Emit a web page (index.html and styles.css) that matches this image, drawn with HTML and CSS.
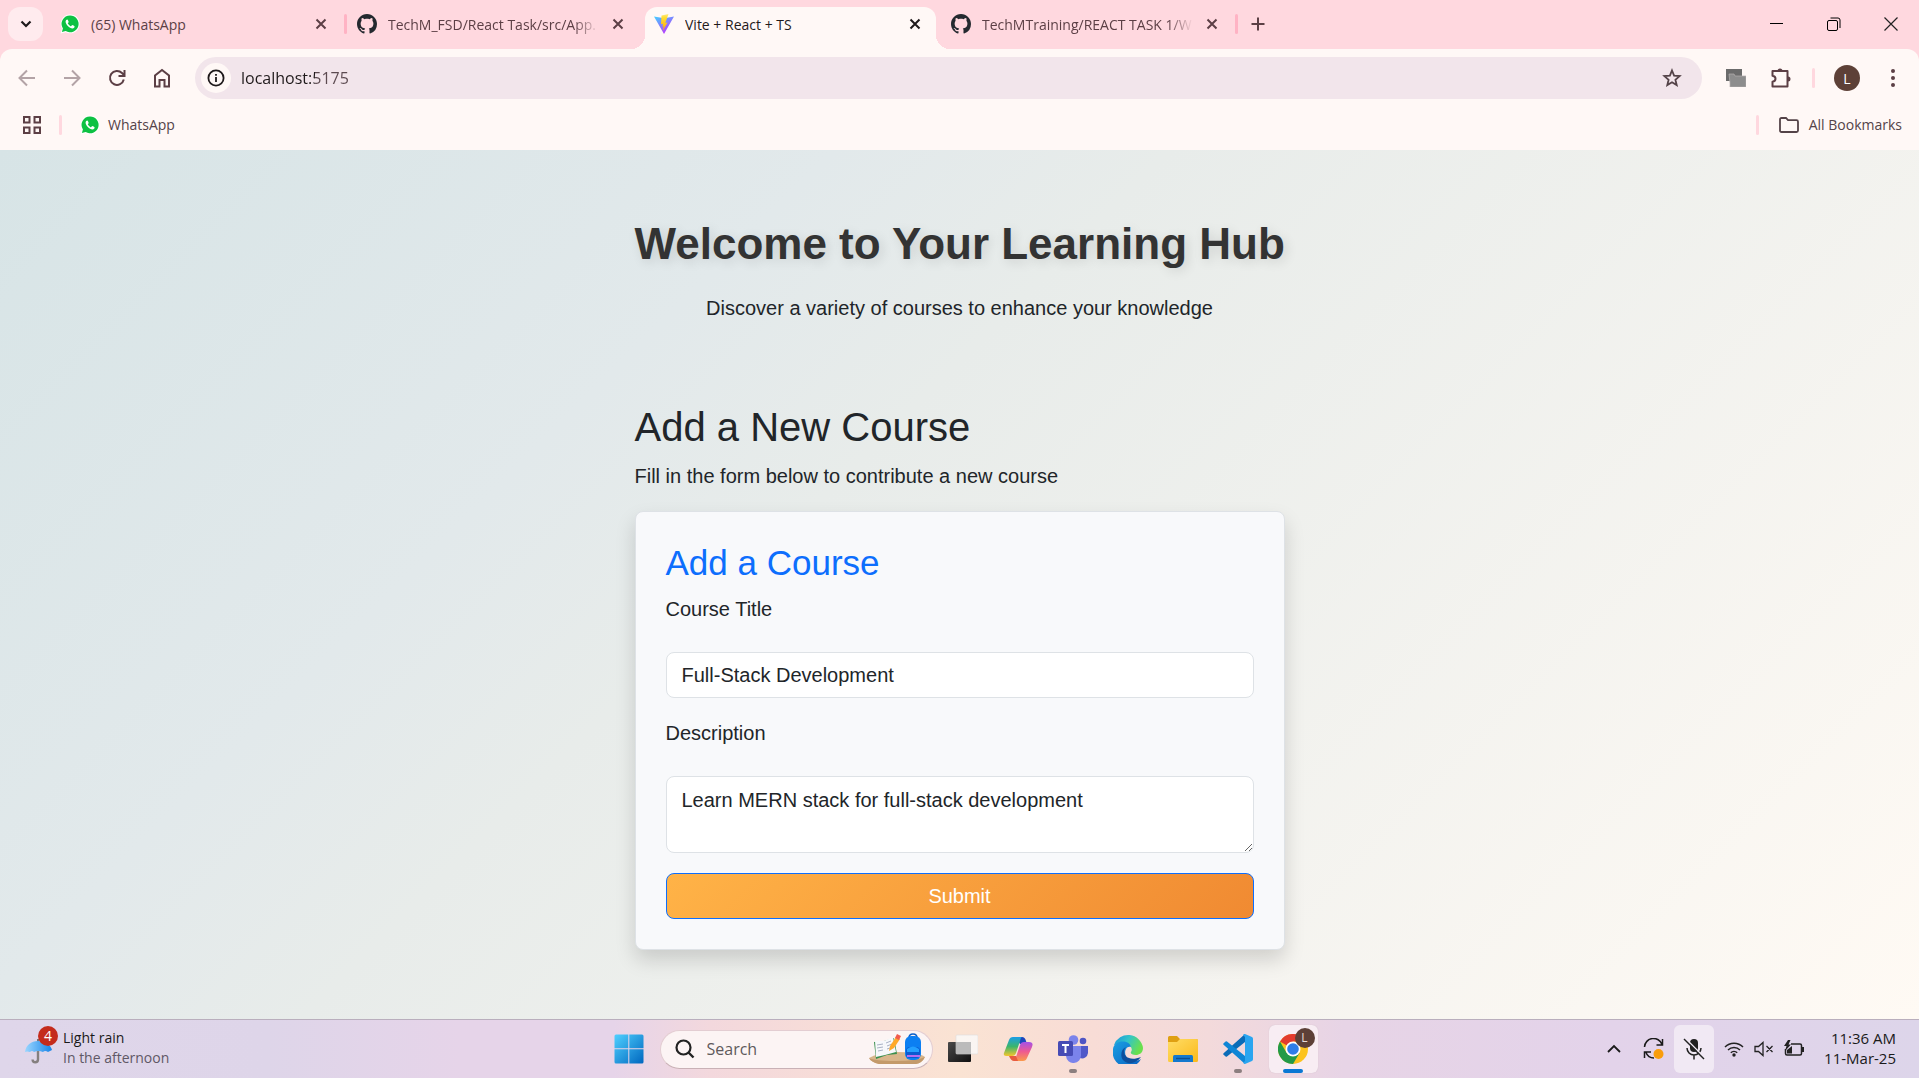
FILE: index.html
```html
<!DOCTYPE html>
<html lang="en">
<head>
<meta charset="utf-8">
<meta name="viewport" content="width=device-width, initial-scale=1">
<title>Vite + React + TS</title>
<link rel="stylesheet" href="styles.css">
</head>
<body>
<svg class="defs" aria-hidden="true">
  <defs>
    <symbol id="close" viewBox="0 0 12 12"><path d="M1.500 1.500 10.500 10.500M10.500 1.500 1.500 10.500" fill="none" stroke="currentColor" stroke-width="2"/></symbol>
    <symbol id="whatsapp" viewBox="0 0 20 20"><path d="M10 .5a9.300 9.300 0 0 0-8 14L.6 19.600l5.200-1.400A9.400 9.400 0 1 0 10 .5z" fill="#fff"/><path d="M10 1.500a8.400 8.400 0 0 0-7.100 12.900L1.900 18l3.800-1A8.400 8.400 0 1 0 10 1.500z" fill="#0dc143"/><path d="M7.200 5.400c-.5 0-1.600.7-1.600 2.200 0 3 3.800 6.800 6.900 6.800 1.400 0 2.100-1.100 2.100-2 0-.4-1.900-1.400-2.300-1.400-.5 0-.8 1.200-1.300 1.200-.7 0-3.200-2.200-3.200-3 0-.4.9-.8.9-1.300S7.700 5.400 7.200 5.400z" fill="#fff"/></symbol>
    <symbol id="github" viewBox="0 0 16 16"><path fill="#24292f" d="M8 0C3.580 0 0 3.580 0 8c0 3.540 2.290 6.530 5.470 7.590.4.070.55-.17.55-.38 0-.19-.01-.82-.01-1.490-2.010.37-2.530-.49-2.690-.94-.09-.23-.48-.94-.82-1.130-.28-.15-.68-.52-.01-.53.63-.01 1.080.58 1.230.82.72 1.210 1.870.87 2.330.66.070-.52.28-.87.51-1.070-1.780-.2-3.640-.89-3.640-3.950 0-.87.31-1.590.82-2.150-.08-.2-.36-1.020.08-2.120 0 0 .67-.21 2.200.82.64-.18 1.320-.27 2-.27s1.360.09 2 .27c1.530-1.040 2.200-.82 2.200-.82.44 1.100.16 1.920.08 2.120.51.56.82 1.270.82 2.150 0 3.070-1.870 3.750-3.650 3.950.29.25.54.73.54 1.480 0 1.070-.01 1.930-.01 2.200 0 .21.15.46.55.38A8.010 8.010 0 0 0 16 8c0-4.420-3.580-8-8-8z"/></symbol>
    <linearGradient id="vp" x1="0" y1="0" x2=".6" y2="1"><stop stop-color="#41d1ff"/><stop offset="1" stop-color="#bd34fe"/></linearGradient>
    <linearGradient id="vy" x1="0" y1="0" x2="0" y2="1"><stop stop-color="#ffea83"/><stop offset=".2" stop-color="#ffdd35"/><stop offset="1" stop-color="#ffa800"/></linearGradient>
    <linearGradient id="win" x1="0" y1="0" x2="1" y2="1"><stop stop-color="#4fd0ff"/><stop offset="1" stop-color="#0067bf"/></linearGradient>
    <linearGradient id="cpa" x1="0" y1="0" x2="0" y2="1"><stop stop-color="#1a9ee8"/><stop offset=".5" stop-color="#3bb56c"/><stop offset="1" stop-color="#f5c52b"/></linearGradient>
    <linearGradient id="cpb" x1="0" y1="0" x2="0" y2="1"><stop stop-color="#a351e8"/><stop offset=".5" stop-color="#ee5a92"/><stop offset="1" stop-color="#fb9a4b"/></linearGradient>
    <linearGradient id="edgeb" x1="0" y1="0" x2="1" y2="1"><stop stop-color="#1a9fe3"/><stop offset="1" stop-color="#0a5fc0"/></linearGradient>
    <linearGradient id="edgeg" x1="0" y1="0" x2="1" y2=".4"><stop stop-color="#1793dd"/><stop offset=".5" stop-color="#33c4c9"/><stop offset="1" stop-color="#69e04d"/></linearGradient>
    <linearGradient id="fold" x1="0" y1="0" x2="1" y2="1"><stop stop-color="#ffdd66"/><stop offset="1" stop-color="#fbb91a"/></linearGradient>
    <linearGradient id="umb" x1="0" y1="0" x2="1" y2="0"><stop stop-color="#9ad6ff"/><stop offset="1" stop-color="#1784e8"/></linearGradient>
    <linearGradient id="dark" x1="0" y1="0" x2="1" y2="1"><stop stop-color="#4a4a4a"/><stop offset="1" stop-color="#0f0f0f"/></linearGradient>
  </defs>
</svg>

<header class="browser">
  <div class="tabstrip">
    <button class="tab-search" aria-label="Search tabs"><svg width="12" height="12" viewBox="0 0 12 12"><path d="M1.500 3.500 6 8l4.500-4.500" fill="none" stroke="#1f1a1b" stroke-width="2.200"/></svg></button>
    <div class="tabs">
      <div class="tab divided">
        <svg class="favicon"><use href="#whatsapp"/></svg>
        <button class="tab-title">(65) WhatsApp</button>
        <button class="tab-close" aria-label="Close tab"><svg width="12" height="12"><use href="#close"/></svg></button>
      </div>
      <div class="tab">
        <svg class="favicon"><use href="#github"/></svg>
        <button class="tab-title faded">TechM_FSD/React Task/src/App.</button>
        <button class="tab-close" aria-label="Close tab"><svg width="12" height="12"><use href="#close"/></svg></button>
      </div>
      <div class="tab active">
        <svg class="favicon" viewBox="0 0 20 20"><path d="M0 2.500 10 20 20 2.500 10.300 4.300z" fill="url(#vp)"/><path d="M14.500 0 7.500 1.400 7 10.200l2-.5-.6 3 1.300-.4-1 4.700 4.800-8.400-2.200.4z" fill="url(#vy)"/></svg>
        <button class="tab-title">Vite + React + TS</button>
        <button class="tab-close" aria-label="Close tab"><svg width="12" height="12"><use href="#close"/></svg></button>
      </div>
      <div class="tab divided">
        <svg class="favicon"><use href="#github"/></svg>
        <button class="tab-title faded">TechMTraining/REACT TASK 1/W</button>
        <button class="tab-close" aria-label="Close tab"><svg width="12" height="12"><use href="#close"/></svg></button>
      </div>
    </div>
    <button class="new-tab" aria-label="New tab"><svg width="14" height="14" viewBox="0 0 14 14"><path d="M7 .5v13M.5 7h13" stroke="#5c3f45" stroke-width="2"/></svg></button>
    <div class="window-controls">
      <button aria-label="Minimize"><svg width="14" height="14" viewBox="0 0 14 14"><path d="M0 6.500h13" stroke="#000"/></svg></button>
      <button aria-label="Restore"><svg width="14" height="14" viewBox="0 0 14 14"><path d="M.5 5A1.500 1.500 0 0 1 2 3.500h7A1.500 1.500 0 0 1 10.500 5v7A1.500 1.500 0 0 1 9 13.500H2A1.500 1.500 0 0 1 .5 12zM3.500 1h7.500a2 2 0 0 1 2 2v8" fill="none" stroke="#000"/></svg></button>
      <button aria-label="Close"><svg width="14" height="14" viewBox="0 0 14 14"><path d="m.5.5 13 13M13.500.5l-13 13" stroke="#222" stroke-width="1.200"/></svg></button>
    </div>
  </div>

  <div class="toolbar">
    <nav class="nav" aria-label="Navigation">
      <button aria-label="Back"><svg width="18" height="18" viewBox="0 0 18 18"><path d="M17 9H2M9 1.500 1.500 9 9 16.500" fill="none" stroke="#b3a3a6" stroke-width="2"/></svg></button>
      <button aria-label="Forward"><svg width="18" height="18" viewBox="0 0 18 18"><path d="M1 9h15M9 1.500 16.500 9 9 16.500" fill="none" stroke="#b3a3a6" stroke-width="2"/></svg></button>
      <button aria-label="Reload"><svg width="18" height="18" viewBox="0 0 18 18"><path d="M15.800 10.500A7 7 0 1 1 14 4l2 2.200M16.500 1v6h-6" fill="none" stroke="#5c3f45" stroke-width="2"/></svg></button>
      <button aria-label="Home"><svg width="18" height="20" viewBox="0 0 18 20"><path d="M2 18.500v-11L9 2l7 5.500v11h-4.500V12h-5v6.500z" fill="none" stroke="#5c3f45" stroke-width="2"/></svg></button>
    </nav>
    <div class="address">
      <button class="site-info" aria-label="Site information"><svg width="18" height="18" viewBox="0 0 18 18"><circle cx="9" cy="9" r="7.600" fill="none" stroke="#1f1a1b" stroke-width="1.800"/><path d="M9 8v5M9 5v1.800" stroke="#1f1a1b" stroke-width="1.800"/></svg></button>
      <input class="url" type="text" aria-label="Address" value="localhost:5175">
      <button class="icon-btn" aria-label="Bookmark this page"><svg width="20" height="20" viewBox="0 0 20 20"><path d="m10 2.500 2.100 5.200 5.500.4-4.200 3.600 1.300 5.400-4.700-2.900-4.700 2.900 1.300-5.400L2.400 8.100l5.500-.4z" fill="none" stroke="#544348" stroke-width="1.800"/></svg></button>
    </div>
    <div class="actions">
      <button aria-label="Screen capture extension"><svg width="20" height="18" viewBox="0 0 20 18"><path d="M0 0h16v12H0z" fill="#6b6b6b"/><path d="M3 5h5l1 2h11v11H4v-4z" fill="#8d8d8d" stroke="#b5b0b0" stroke-width=".7"/></svg></button>
      <button aria-label="Extensions"><svg width="22" height="22" viewBox="0 0 22 22"><path d="M2.500 4h15v15.500h-15v-4.800c4-.5 4-5.400 0-6z" fill="none" stroke="#5c3f45" stroke-width="2" stroke-linejoin="round"/><path d="M7.500 4a2.500 2.500 0 0 1 5 0zM18 9.500a2.500 2.500 0 0 1 0 5z" fill="#5c3f45"/></svg></button>
      <span class="divider"></span>
      <button class="avatar" aria-label="Profile">L</button>
      <button aria-label="Menu"><svg width="6" height="18" viewBox="0 0 6 18" fill="#5c3f45"><circle cx="3" cy="2" r="2"/><circle cx="3" cy="9" r="2"/><circle cx="3" cy="16" r="2"/></svg></button>
    </div>
  </div>

  <div class="bookmarks">
    <button class="apps" aria-label="Apps"><svg width="18" height="18" viewBox="0 0 18 18"><path d="M1 1h5.500v5.500H1zM11.500 1H17v5.500h-5.500zM1 11.500h5.500V17H1zM11.500 11.500H17V17h-5.500z" fill="none" stroke="#5c3f45" stroke-width="2"/></svg></button>
    <span class="divider"></span>
    <a class="bookmark" href="#whatsapp-web"><svg class="favicon"><use href="#whatsapp"/></svg>WhatsApp</a>
    <span class="divider push"></span>
    <button class="bookmark all"><svg width="20" height="16" viewBox="0 0 20 16"><path d="M1 2.500Q1 1 2.500 1H7l2 2.200h8.500Q19 3.200 19 4.700v8.800q0 1.500-1.500 1.500h-15Q1 15 1 13.500z" fill="none" stroke="#544348" stroke-width="1.800"/></svg>All Bookmarks</button>
  </div>
</header>

<main class="page">
  <div class="container">
    <header class="hero">
      <h1>Welcome to Your Learning Hub</h1>
      <p>Discover a variety of courses to enhance your knowledge</p>
    </header>
    <section>
      <h2>Add a New Course</h2>
      <p class="lead">Fill in the form below to contribute a new course</p>
      <form class="card">
        <h3>Add a Course</h3>
        <div class="field">
          <label for="title">Course Title</label>
          <input id="title" type="text" value="Full-Stack Development">
        </div>
        <div class="field">
          <label for="description">Description</label>
          <textarea id="description" rows="2">Learn MERN stack for full-stack development</textarea>
        </div>
        <button class="submit" type="button">Submit</button>
      </form>
    </section>
  </div>
</main>

<footer class="taskbar">
  <button class="weather">
    <span class="weather-icon">
      <svg width="28" height="28" viewBox="0 0 28 28"><path d="M13 2v3" stroke="#777" stroke-width="2"/><path d="M13 13v9.500a2.700 2.700 0 0 1-5.400 0" fill="none" stroke="#85807f" stroke-width="2.400"/><path d="M0 15C1 8 6 4 13 4s13 4 14 9l-4 2q-3-2-5 0-5-2-9 0-2-2-4 0-3-1-5 0z" fill="url(#umb)"/></svg>
      <span class="badge">4</span>
    </span>
    <span class="weather-text"><span>Light rain</span><span class="muted">In the afternoon</span></span>
  </button>

  <div class="dock">
    <button class="app" aria-label="Start"><svg width="30" height="30" viewBox="0 0 30 30"><path d="M2 .5h12.300v13.800H.5V2Q.5.5 2 .5zM15.300.5H28q1.500 0 1.500 1.500v12.300H15.300zM.5 15.300h13.800v14.200H2Q.5 29.500.5 28zM15.300 15.300h14.200V28q0 1.500-1.500 1.500H15.300z" fill="url(#win)"/></svg></button>
    <label class="search">
      <svg width="20" height="20" viewBox="0 0 20 20"><circle cx="8.500" cy="8.500" r="7" fill="none" stroke="#222" stroke-width="2.200"/><path d="m13.500 13.500 5 5" stroke="#222" stroke-width="2.400"/></svg>
      <input type="search" placeholder="Search" aria-label="Search">
      <svg width="58" height="32" viewBox="0 0 58 32"><path d="M1 25q8-5 27-6 22 0 29 5-3 6-9 7H11Q3 29 1 25z" fill="#d9b68c"/><path d="M1 25q6 3 27 3t29-4q-3 6-9 7H11Q3 29 1 25z" fill="#c39a6b"/><path d="m6 9 10-1 10-3 3 16-10 1-11 4z" fill="#3b8f4e"/><path d="m7 8 9 0 1 14-9 2zM16 8l9-4 3 15-11 3z" fill="#f7f8fb"/><path d="m9 12 6-1M9 15l6-1M10 18l5-1M18 10l5-2M19 13l5-2M19 16l6-2" stroke="#a9b2c4"/><path d="m21 18 1-5 6-9 4 2-6 9z" fill="#ffa929"/><path d="m27 5 2-4 4 2-2 4z" fill="#f15b4c"/><path d="M41 5q0-4 4-4t4 4" fill="none" stroke="#0b5fc9" stroke-width="1.600"/><rect x="37" y="3" width="16" height="24" rx="6" fill="#0c7ff2"/><rect x="38" y="14" width="14" height="11" rx="4" fill="#0b5ad0"/><path d="M39 16q6-5 12 0v3H39z" fill="#23a0ff"/><path d="M39 23h13" stroke="#b46cf0" stroke-width="2"/></svg>
    </label>
    <button class="app" aria-label="Task view"><svg width="30" height="30" viewBox="0 0 30 30"><rect y="8" width="23" height="20" rx="1" fill="url(#dark)"/><rect x="8" y="1" width="22" height="19" rx="1" fill="#fafafa" fill-opacity=".8" stroke="#ddd" stroke-width=".6"/><path d="M8 8h15v12H8z" fill="#b8b8b8" opacity=".9"/></svg></button>
    <button class="app" aria-label="Copilot"><svg width="30" height="28" viewBox="0 0 30 28"><path d="M13 2h6q3 0 4 4l1 3h-7z" fill="#1d47bd"/><path d="M19 2H10Q7 2 6 5L1 18q-1 3 2 3h6q3 0 4-3l4-12q1-4 2-4z" fill="url(#cpa)"/><path d="M11 26h9q3 0 4-3l5-11q2-5-3-5h-5q-3 0-4 3l-4 12q-1 4-2 4z" fill="url(#cpb)"/><path d="M6 21h7l2 5h-4q-3 0-5-5z" fill="#e85b3f"/></svg></button>
    <button class="app running" aria-label="Teams"><svg width="30" height="28" viewBox="0 0 30 28"><circle cx="25" cy="6" r="3.300" fill="#4f55c4"/><path d="M20 11h10v7a6 6 0 0 1-8 5z" fill="#5059c9"/><circle cx="15.500" cy="5" r="4.800" fill="#7b83eb"/><path d="M8 11h15v9a7.500 7.500 0 0 1-15 1z" fill="#7b83eb"/><rect y="6" width="15" height="15" rx="1.500" fill="#464bb5"/><path d="M4 10h7M7.500 10v8" stroke="#fff" stroke-width="2"/></svg></button>
    <button class="app" aria-label="Edge"><svg width="30" height="30" viewBox="0 0 30 30"><path d="M1 11A15 15 0 0 1 30 14c0 5-4 7-7 7-4 0-6-1.500-5-3 2-3 0-7-5-8-6-1-10 1-12 1z" fill="url(#edgeg)"/><path d="M0 15C1 6 16 5 18 13c-5-2-8 6-4 11 3 4 9 4 14 1A15 15 0 0 1 0 15z" fill="url(#edgeb)"/><path d="M13 13c-5 5 0 16 15 10-5 7-14 8-18 3-3-4-2-11 3-13z" fill="#0d4f9d"/></svg></button>
    <button class="app" aria-label="File Explorer"><svg width="30" height="28" viewBox="0 0 30 28"><path d="M0 2.500Q0 1 1.500 1H9l3 3h16.500Q30 4 30 5.500V12H0z" fill="#dfa012"/><path d="M0 7h9l3-3h16.500Q30 4 30 5.500v20q0 1.500-1.500 1.500h-27Q0 27 0 25.500z" fill="url(#fold)"/><path d="M5 27v-5.500Q5 20 6.500 20h17q1.500 0 1.500 1.500V27z" fill="#1479ce"/><path d="M8 23.500h14" stroke="#0b4f94" stroke-width="1.400"/></svg></button>
    <button class="app running" aria-label="Visual Studio Code"><svg width="30" height="30" viewBox="0 0 30 30"><path d="m22 0 0 8L4 22.500q-.7.600-1.400 0L.6 20.800q-.8-.8 0-1.600z" fill="#0a6cb8"/><path d="m22 30 0-8L4 7.500q-.7-.6-1.400 0L.6 9.200q-.8.800 0 1.600z" fill="#0f86d6"/><path d="m21 0 1 0 7 3q1 .5 1 1.800v20.400q0 1.300-1 1.800l-7 3-2-1 2-2V3l-2-2z" fill="#2aa5f0"/></svg></button>
    <button class="app current" aria-label="Chrome"><svg width="30" height="30" viewBox="0 0 30 30"><circle cx="15" cy="15" r="15" fill="#fcc31e"/><path d="M15 15 2 7.500A15 15 0 0 1 28 7.500H15z" fill="#e33b2e"/><path d="M2 7.500A15 15 0 0 0 15 30l6.500-11L8.500 18.800z" fill="#239a48"/><circle cx="15" cy="15" r="7.500" fill="#fff"/><circle cx="15" cy="15" r="5.800" fill="#2f7de9"/></svg><span class="profile">L</span></button>
  </div>

  <div class="tray">
    <button class="tray-item" aria-label="Show hidden icons"><svg width="14" height="10" viewBox="0 0 14 10"><path d="m1 8 6-6 6 6" fill="none" stroke="#1a1a1a" stroke-width="1.800"/></svg></button>
    <button class="tray-item" aria-label="Sync pending"><svg width="22" height="22" viewBox="0 0 22 22"><path d="M1.500 9A9 9 0 0 1 19 6.500M19.500 1v6h-6M11 20q-6 0-8-5.500M1.500 20v-6H8" fill="none" stroke="#1a1a1a" stroke-width="1.500"/><circle cx="15.500" cy="16" r="5" fill="#f99d0c"/></svg></button>
    <button class="tray-item mic" aria-label="Microphone muted"><svg width="22" height="22" viewBox="0 0 22 22"><rect x="7" y="1" width="8" height="13" rx="4" fill="#222"/><path d="M4 10a7 7 0 0 0 14 0M11 17v4.500" fill="none" stroke="#222" stroke-width="1.500"/><path d="m2 0 20 20" stroke="#f1e9f4" stroke-width="1.500"/><path d="m1 1 20 20" stroke="#222" stroke-width="1.500"/></svg></button>
    <button class="tray-group" aria-label="Network, volume and battery">
      <svg width="20" height="16" viewBox="0 0 20 16"><path d="M1 6a12.500 12.500 0 0 1 18 0M4 9a8.500 8.500 0 0 1 12 0M6.800 11.800a4.600 4.600 0 0 1 6.400 0" fill="none" stroke="#222" stroke-width="1.500"/><circle cx="10" cy="14" r="1.700" fill="#222"/></svg>
      <svg width="20" height="16" viewBox="0 0 20 16"><path d="M1 5.500h3.500L9 1.500v13l-4.500-4H1zM12.500 5l6 6M18.500 5l-6 6" fill="none" stroke="#222" stroke-width="1.300"/></svg>
      <svg width="20" height="18" viewBox="0 0 20 18"><path d="M7 4h9q1.500 0 1.500 1.500v8q0 1.500-1.500 1.500H3q-1.500 0-1.500-1.500V9" fill="none" stroke="#222" stroke-width="1.500"/><path d="M3 13.500V10l5-4v7.500zM18 7h2v5h-2zM4 0 0 6h2.500L1 11l6-6.500H4.500L6.500 0z" fill="#222"/></svg>
    </button>
    <button class="clock"><span>11:36 AM</span><span>11-Mar-25</span></button>
  </div>
</footer>
</body>
</html>
```
FILE: styles.css
```css
*, *::before, *::after { box-sizing: border-box; }

:root {
  --frame: #ffd8df;
  --surface: #fff8f6;
  --ink: #5c3f45;
  --ui: "Open Sans", "Noto Sans", sans-serif;
  --text: "Liberation Sans", Arial, sans-serif;
}

body {
  margin: 0;
  min-height: 100vh;
  display: flex;
  flex-direction: column;
  font-family: var(--ui);
  font-size: 14px;
}

button {
  border: 0;
  padding: 0;
  background: none;
  font: inherit;
  color: inherit;
  cursor: pointer;
}

svg { display: block; flex: none; }
.defs { position: absolute; width: 0; height: 0; }

/* Browser frame */
.browser { background: var(--frame); color: var(--ink); }

.tabstrip { display: flex; height: 49px; padding: 7px 0 0 8px; }

.tab-search {
  display: grid;
  place-items: center;
  width: 35px;
  height: 34px;
  margin-right: 8px;
  border-radius: 12px;
  background: #ffebee;
}

.tabs { display: flex; gap: 6px; min-width: 0; }

.tab {
  position: relative;
  flex: 0 1 291px;
  width: 291px;
  height: 34px;
  display: flex;
  align-items: center;
  padding: 0 10px 0 9px;
  min-width: 0;
}

.tab.divided::after {
  content: "";
  position: absolute;
  right: -5px;
  top: 7px;
  width: 3px;
  height: 20px;
  border-radius: 2px;
  background: #ffb3c4;
}

.tab.active {
  height: 42px;
  padding-bottom: 8px;
  border-radius: 12px 12px 0 0;
  background: var(--surface);
  color: #1f1a1b;
}

.tab.active::before,
.tab.active::after {
  content: "";
  position: absolute;
  bottom: 0;
  width: 14px;
  height: 14px;
}
.tab.active::before { left: -14px; background: radial-gradient(circle at 0 0, transparent 14px, var(--surface) 14px); }
.tab.active::after { right: -14px; background: radial-gradient(circle at 100% 0, transparent 14px, var(--surface) 14px); }

.favicon { width: 20px; height: 20px; }

.tab-title {
  flex: 1;
  min-width: 0;
  margin-left: 11px;
  overflow: hidden;
  white-space: nowrap;
  text-align: left;
}
.tab-title.faded { mask-image: linear-gradient(to right, #000 88%, transparent); }

.tab-close {
  display: grid;
  place-items: center;
  width: 22px;
  height: 22px;
  margin-left: 8px;
}

.new-tab { width: 36px; height: 34px; margin-left: 7px; display: grid; place-items: center; }

.window-controls { display: flex; margin: 0 0 0 auto; }
.window-controls button { width: 57px; height: 34px; display: grid; place-items: center; }

.toolbar {
  display: flex;
  align-items: center;
  height: 58px;
  padding: 0 4px;
  border-radius: 12px 12px 0 0;
  background: var(--surface);
}

.nav { display: flex; margin-right: 11px; }
.nav button { width: 45px; height: 36px; display: grid; place-items: center; }

.address {
  flex: 1;
  display: flex;
  align-items: center;
  height: 42px;
  padding: 0 20px 0 6px;
  border-radius: 21px;
  background: #f2e5eb;
}

.site-info {
  display: grid;
  place-items: center;
  width: 30px;
  height: 30px;
  border-radius: 50%;
  background: var(--surface);
}

.url {
  flex: 1;
  min-width: 0;
  height: 30px;
  padding: 0;
  border: 0;
  margin: 0 12px 0 10px;
  outline: 0;
  font: 16px/30px var(--ui);
  color: transparent;
  background: linear-gradient(to right, #1f1a1b 74px, #5c4a50 74px) text;
}

.actions { display: flex; align-items: center; margin-left: 11px; }
.actions button { display: grid; place-items: center; width: 45px; height: 36px; }

.divider { width: 3px; height: 20px; border-radius: 2px; background: #ffd8df; }
.actions .divider { margin: 0 9px; }

.actions .avatar {
  width: 26px;
  height: 26px;
  margin: 0 10px;
  border-radius: 50%;
  background: #5d4037;
  color: #fff;
}

.bookmarks {
  display: flex;
  align-items: center;
  height: 43px;
  padding: 0 17px 8px 16px;
  background: var(--surface);
}
.apps { width: 32px; height: 32px; display: grid; place-items: center; margin-right: 11px; }
.bookmark {
  display: flex;
  align-items: center;
  gap: 8px;
  margin-left: 18px;
  color: #544348;
  text-decoration: none;
}
.bookmark.all { gap: 10px; margin-left: 20px; }
.push { margin-left: auto; }

/* Course page */
.page {
  flex: 1;
  padding: 67px 24px 60px;
  background: linear-gradient(135deg, #d7e4e6, #e2e9eb 30%, #e8ecea 42%, #fffaf4);
  font-family: var(--text);
  font-size: 20px;
  line-height: 30px;
  color: #212529;
}

.container { max-width: 650px; margin: 0 auto; }

h1, h2, h3, p { margin: 0; }

.hero { text-align: center; margin-bottom: 80px; }

h1 {
  margin-bottom: 23px;
  font-size: 44px;
  line-height: 53px;
  color: #333;
  text-shadow: 3px 3px 12px rgba(0, 0, 0, .12);
}
@media (min-width: 720px) {
  h1 { white-space: nowrap; }
}

h2 { margin-bottom: 10px; font-size: 40px; line-height: 48px; font-weight: 400; }
.lead { margin-bottom: 20px; }

.card {
  padding: 30px;
  border: 1px solid #dee2e6;
  border-radius: 8px;
  background: #f8f9fb;
  box-shadow: 0 10px 20px rgba(0, 0, 0, .15);
}

h3 { margin-bottom: 10px; font-size: 35px; line-height: 42px; font-weight: 400; color: #0d6efd; }

.field { display: flex; flex-direction: column; gap: 28px; margin-bottom: 20px; }

.field input,
.field textarea {
  display: block;
  width: 100%;
  padding: 8px 15px;
  border: 1px solid #dee2e6;
  border-radius: 8px;
  background: #fff;
  font: inherit;
  color: inherit;
}
.field input { height: 46px; }
.field textarea { height: 77px; resize: vertical; }

.submit {
  display: block;
  width: 100%;
  padding: 7px 15px;
  border: 1px solid #0d6efd;
  border-radius: 8px;
  background: linear-gradient(135deg, #ffb347, #f08a32);
  color: #fff;
}

/* Taskbar */
.taskbar {
  display: grid;
  grid-template-columns: 1fr auto 1fr;
  align-items: center;
  height: 59px;
  border-top: 1px solid #b9aebd;
  background: linear-gradient(to right, #dfd6ea, #ded5e9 14%, #e6d4e9 24%, #e6d4e9 32%, #f3d8dd 37%, #f9dfd5 46%, #fae3d3 50%, #f8dcd6 57%, #f3dadb 63%, #e7d4e6 70%, #e3d3ea 84%, #ddd5ea);
  font-size: 15px;
  color: #1a1a1a;
}

.weather { display: flex; align-items: center; gap: 10px; margin-left: 25px; justify-self: start; font-size: 14px; }
.weather-icon { position: relative; padding-top: 4px; }
.badge {
  position: absolute;
  left: 13px;
  top: -7px;
  width: 20px;
  height: 20px;
  border-radius: 50%;
  background: #c42b1c;
  color: #fff;
  line-height: 20px;
  text-align: center;
}
.weather-text { display: flex; flex-direction: column; padding-bottom: 2px; line-height: 20px; text-align: left; }
.muted { color: #5f5866; }

.dock { display: flex; align-items: center; gap: 6px; padding-left: 3px; }
.app {
  position: relative;
  display: grid;
  place-items: center;
  width: 49px;
  height: 48px;
  border-radius: 6px;
}
.app.current { background: #f8edf3; box-shadow: 0 0 1px #c9b8c4; }
.app.running::after,
.app.current::after {
  content: "";
  position: absolute;
  bottom: 0;
  width: 8px;
  height: 4px;
  border-radius: 2px;
  background: #8c7f80;
}
.app.current::after { width: 20px; background: #0a78d4; }
.profile {
  position: absolute;
  right: 3px;
  top: 3px;
  width: 20px;
  height: 20px;
  border-radius: 50%;
  background: #5d4037;
  color: #e8dcd8;
  font-size: 12px;
  line-height: 20px;
}

.search {
  display: flex;
  align-items: center;
  width: 273px;
  height: 39px;
  padding: 0 6px 0 14px;
  border: 1px solid #e3cdd2;
  border-bottom-color: #c9b1b6;
  border-radius: 20px;
  background: #fcf4f4;
}
.search input {
  flex: 1;
  min-width: 0;
  margin-left: 10px;
  border: 0;
  outline: 0;
  background: none;
  font: 16px/24px var(--ui);
}
.search input::placeholder { color: #5f5a5c; opacity: 1; }

.tray { display: flex; align-items: center; justify-self: end; margin-right: 23px; }
.tray-item { display: grid; place-items: center; width: 40px; height: 48px; border-radius: 6px; }
.tray-item.mic { background: #f1e9f4; }
.tray-group { display: flex; align-items: center; gap: 10px; margin: 0 20px 0 10px; }
.clock { display: flex; flex-direction: column; padding-bottom: 2px; line-height: 20px; text-align: right; }
```
